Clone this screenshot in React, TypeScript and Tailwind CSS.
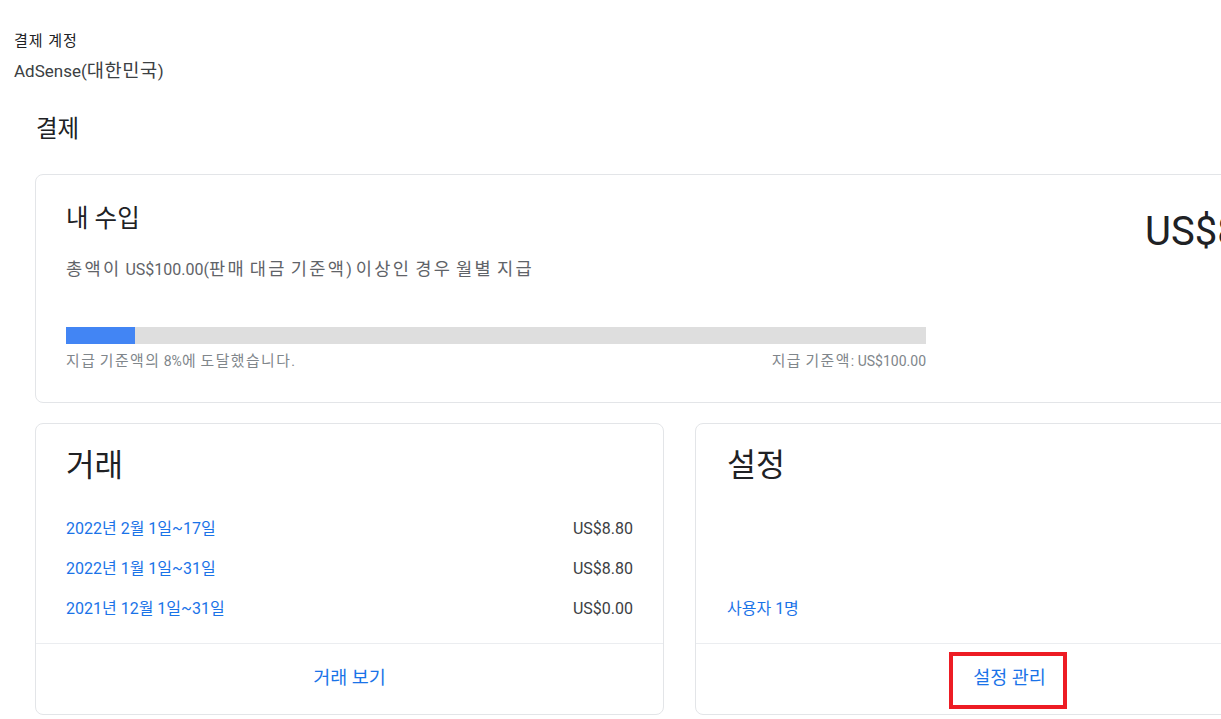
const font = "font-['Roboto','Noto_Sans_CJK_KR',sans-serif]";

// Hangul runs render a bit wider in the reference, so they get their own size
function Ko({ t, k = "text-[1.15em]" }: { t: string; k?: string }) {
  const parts = t.split(/([\u3131-\uD7A3]+)/);
  return (
    <>
      {parts.map((p, i) =>
        /[\u3131-\uD7A3]/.test(p) ? (
          <span key={i} className={k}>
            {p}
          </span>
        ) : (
          p
        )
      )}
    </>
  );
}

const rows = [
  { label: "2022년 2월 1일~17일", amount: "US$8.80" },
  { label: "2022년 1월 1일~31일", amount: "US$8.80" },
  { label: "2021년 12월 1일~31일", amount: "US$0.00" },
];

export default function App() {
  return (
    <div className={`${font} h-[719px] w-[1221px] overflow-hidden bg-white text-[#202124]`}>
      <div className="w-[1340px] pt-[33px]">
        <div className="pl-[14px]">
          <div className="text-[15px] leading-[16px] tracking-[1px] text-[#202124]">결제 계정</div>
          <div className="mt-[10px] text-[17px] leading-[24px] text-[#3c4043]">
            <Ko t="AdSense(대한민국)" k="text-[1.1em] tracking-[0.03em]" />
          </div>
        </div>

        <div className="pl-[35px] pr-[16px]">
          <h1 className="mt-[30px] pl-[1px] text-[23.5px] leading-[32px] text-[#202124]">결제</h1>

          {/* 내 수입 */}
          <div className="mt-[29px] flex h-[229px] rounded-lg border border-[#e3e5e8] px-[30px] pt-[28px]">
            <div className="w-[860px] shrink-0">
              <div className="text-[24.5px] leading-[32px] text-[#202124]">내 수입</div>
              <div className="mt-[23px] text-[16px] leading-[22px] text-[#5f6368]">
                <Ko
                  t="총액이 US$100.00(판매 대금 기준액) 이상인 경우 월별 지급"
                  k="text-[1.1em] tracking-[0.13em]"
                />
              </div>
              <div className="mt-[46px] h-[17px] w-full bg-[#dedede]">
                <div className="h-full w-[69px] bg-[#4285f4]" />
              </div>
              <div className="mt-[8px] flex justify-between text-[14px] leading-[18px] text-[#80868b]">
                <span>
                  <Ko t="지급 기준액의 8%에 도달했습니다." k="text-[1.06em] tracking-[0.1em]" />
                </span>
                <span>
                  <Ko t="지급 기준액: US$100.00" k="text-[1.06em] tracking-[0.1em]" />
                </span>
              </div>
            </div>
            <div className="pl-[219px] pt-[5px] text-[40px] leading-[48px] whitespace-nowrap text-[#202124]">
              US$8.80
            </div>
          </div>

          <div className="mt-[20px] grid grid-cols-2 gap-[31px]">
            {/* 거래 */}
            <div className="flex h-[292px] flex-col rounded-lg border border-[#e3e5e8]">
              <div className="flex-1 px-[30px] pt-[24px]">
                <div className="text-[31px] leading-[36px] text-[#202124]">거래</div>
                <div className="mt-[34px] flex flex-col gap-[18px]">
                  {rows.map((r) => (
                    <div key={r.label} className="flex justify-between text-[16px] leading-[22px]">
                      <span className="text-[#1a73e8]">{r.label}</span>
                      <span className="text-[#3c4043]">{r.amount}</span>
                    </div>
                  ))}
                </div>
              </div>
              <div className="flex h-[71px] items-center justify-center border-t border-[#ebedf0]">
                <span className="text-[18.5px] text-[#1a73e8]">거래 보기</span>
              </div>
            </div>

            {/* 설정 */}
            <div className="flex h-[292px] flex-col rounded-lg border border-[#e3e5e8]">
              <div className="flex flex-1 flex-col justify-between px-[31px] pb-[23px] pt-[24px]">
                <div className="text-[31.5px] leading-[36px] text-[#202124]">설정</div>
                <span className="text-[16px] leading-[22px] text-[#1a73e8]">사용자 1명</span>
              </div>
              <div className="relative flex h-[71px] items-center justify-center border-t border-[#ebedf0]">
                <span className="text-[18.5px] text-[#1a73e8]">설정 관리</span>
                <div className="absolute left-[253px] top-[8px] h-[57px] w-[118px] border-[4px] border-[#ed1c24]" />
              </div>
            </div>
          </div>
        </div>
      </div>
    </div>
  );
}
